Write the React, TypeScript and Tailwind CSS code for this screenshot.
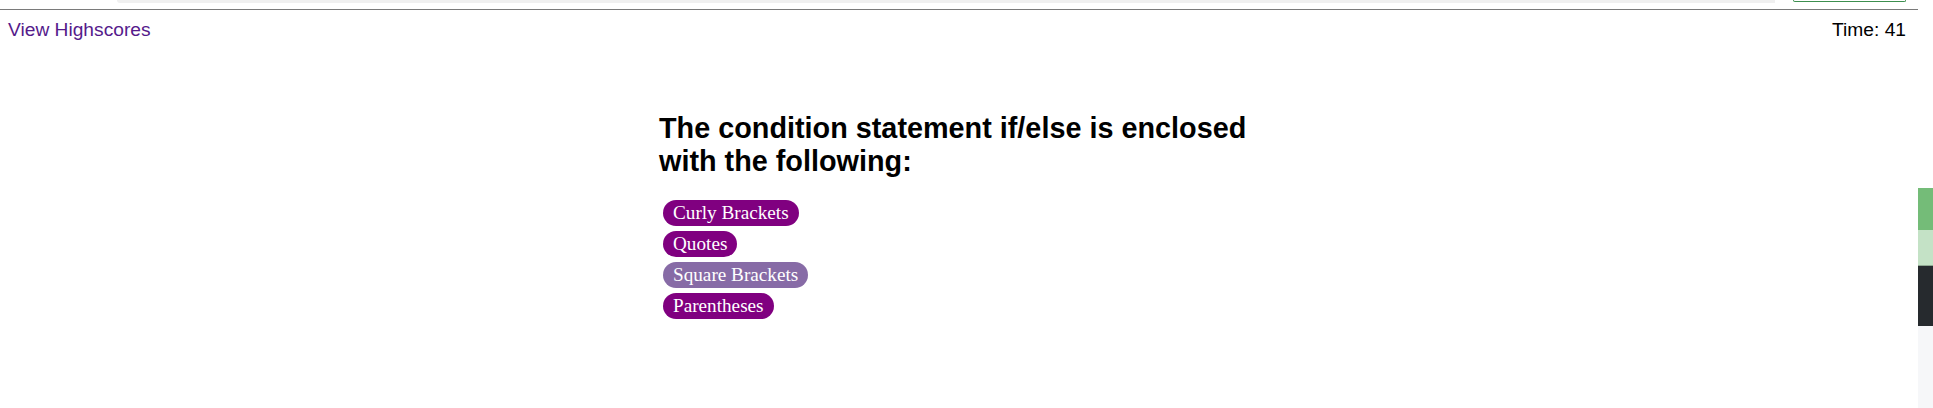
const choices = [
  { label: "Curly Brackets", active: false },
  { label: "Quotes", active: false },
  { label: "Square Brackets", active: true },
  { label: "Parentheses", active: false },
];

export default function App() {
  return (
    <div className="flex h-[408px] w-full bg-white font-['Liberation_Sans',Arial,sans-serif]">
      <div className="flex flex-1 flex-col">
        {/* cut-off strip from the page above */}
        <div className="flex h-[10px] items-start border-b border-[#7a7a7a]">
          <div className="ml-[117px] h-[3px] w-[1658px] rounded-bl-[10px] bg-[#f0f0f0]" />
          <div className="ml-[18px] h-[2px] w-[113px] rounded-b-[4px] border-x border-b border-[#3d8f4f]" />
        </div>

        <header className="flex items-start justify-between pl-2 pr-[12px] pt-[9px] text-[19.2px] leading-[22px]">
          <a href="#" className="text-[#551a8b]">
            View Highscores
          </a>
          <span className="text-black">Time: 41</span>
        </header>

        <main className="mx-auto mt-[71px] w-[600px] pr-[1px]">
          <h2 className="text-[28.8px] font-bold leading-[33px] text-black">
            The condition statement if/else is enclosed with the following:
          </h2>
          <div className="mt-[22px] flex flex-col items-start gap-[5px] pl-[4px]">
            {choices.map((c) => (
              <button
                key={c.label}
                className={
                  c.active
                    ? "rounded-full bg-[#876ba6] px-[10px] py-[2px] font-['Liberation_Serif','Times_New_Roman',serif] text-[19.2px] leading-[22px] text-white"
                    : "rounded-full bg-[#800080] px-[10px] py-[2px] font-['Liberation_Serif','Times_New_Roman',serif] text-[19.2px] leading-[22px] text-white"
                }
              >
                {c.label}
              </button>
            ))}
          </div>
        </main>
      </div>

      {/* side strip */}
      <div className="flex w-[15px] flex-col">
        <div className="h-[188px] bg-white" />
        <div className="h-[42px] bg-[#74bc78]" />
        <div className="h-[36px] border-b border-[#8fa892] bg-[#c4e2c6]" />
        <div className="h-[60px] bg-[#262a2e]" />
        <div className="flex-1 bg-[#f6f7f9]" />
      </div>
    </div>
  );
}
